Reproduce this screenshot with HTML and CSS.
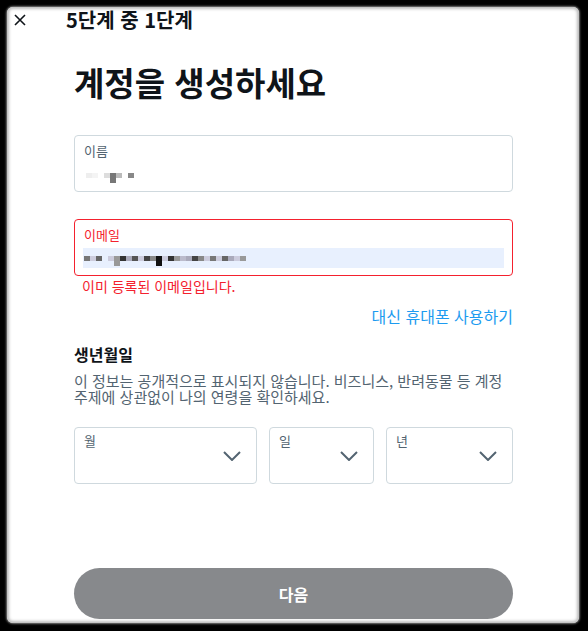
FILE: index.html
```html
<!DOCTYPE html>
<html lang="ko">
<head>
<meta charset="utf-8">
<link rel="stylesheet" href="styles.css">
</head>
<body>
<div class="panel">
  <div class="topbar">
    <svg class="close" viewBox="0 0 12 12" width="12" height="12"><path d="M1 1L11 11M11 1L1 11" stroke="#0f1419" stroke-width="1.6" fill="none"/></svg>
    <span class="step">5단계 중 1단계</span>
  </div>
  <div class="content">
    <h1 class="title">계정을 생성하세요</h1>
    <div class="field">
      <span class="label">이름</span>
      <div class="value">
        <span class="px" style="background:#eee"></span><span class="px" style="background:#f4f4f4"></span><span class="gap"></span><span class="px" style="background:#ddd"></span><span class="px tall" style="background:#777"></span><span class="px" style="background:#bbb"></span><span class="gap"></span><span class="px" style="background:#888"></span>
      </div>
    </div>
    <div class="field error">
      <span class="label">이메일</span>
      <div class="value autofill">
        <span class="px" style="background:#777"></span><span class="px" style="background:#ccd"></span><span class="px" style="background:#666"></span><span class="gap"></span><span class="px" style="background:#ccd"></span><span class="px tall" style="background:#999"></span><span class="px" style="background:#333"></span><span class="px" style="background:#aab"></span><span class="px" style="background:#555"></span><span class="px" style="background:#ccd"></span><span class="px" style="background:#444"></span><span class="px" style="background:#888"></span><span class="px tall" style="background:#111"></span><span class="px" style="background:#ccd"></span><span class="px" style="background:#333"></span><span class="px" style="background:#999"></span><span class="px" style="background:#bbc"></span><span class="px" style="background:#aab"></span><span class="px" style="background:#444"></span><span class="px" style="background:#888"></span><span class="px" style="background:#ccd"></span><span class="px" style="background:#777"></span><span class="px" style="background:#ccd"></span><span class="px" style="background:#666"></span><span class="px" style="background:#aab"></span><span class="px" style="background:#ccd"></span><span class="px" style="background:#999"></span>
      </div>
    </div>
    <p class="errmsg">이미 등록된 이메일입니다.</p>
    <div class="alt"><a class="link">대신 휴대폰 사용하기</a></div>
    <h2 class="subhead">생년월일</h2>
    <p class="desc">이 정보는 공개적으로 표시되지 않습니다. 비즈니스, 반려동물 등 계정 주제에 상관없이 나의 연령을 확인하세요.</p>
    <div class="selects">
      <div class="select month"><span class="label">월</span><svg class="chev" viewBox="0 0 18 10" width="18" height="10"><path d="M1 1L9 9L17 1" stroke="#536471" stroke-width="2" fill="none"/></svg></div>
      <div class="select day"><span class="label">일</span><svg class="chev" viewBox="0 0 18 10" width="18" height="10"><path d="M1 1L9 9L17 1" stroke="#536471" stroke-width="2" fill="none"/></svg></div>
      <div class="select year"><span class="label">년</span><svg class="chev" viewBox="0 0 18 10" width="18" height="10"><path d="M1 1L9 9L17 1" stroke="#536471" stroke-width="2" fill="none"/></svg></div>
    </div>
  </div>
  <div class="footer">
    <button class="next">다음</button>
  </div>
</div>
</body>
</html>
```

FILE: styles.css
```css
* { box-sizing: border-box; }
html, body { margin: 0; padding: 0; }
body {
  background: #000;
  width: 588px;
  height: 631px;
  overflow: hidden;
  padding: 7px 9px 8px 7px;
  font-family: "Noto Sans CJK KR", "Noto Sans", sans-serif;
  color: #0f1419;
}
.panel {
  background: #fff;
  width: 572px;
  height: 616px;
  border-radius: 6px;
  box-shadow: inset 0 0 3px 2px #bbb, 0 0 2px 1px #777;
  display: flex;
  flex-direction: column;
}
.topbar {
  display: flex;
  align-items: center;
  height: 26px;
  padding: 0 0 0 7px;
}
.close { display: block; }
.step {
  margin-left: 40px;
  font-size: 20px;
  font-weight: 700;
  line-height: 26px;
}
.content {
  padding: 0 66px 0 67px;
  flex: 1;
}
.title {
  margin: 28px 0 0;
  font-size: 33px;
  font-weight: 700;
  line-height: 42px;
}
.field {
  margin-top: 32px;
  height: 57px;
  border: 1px solid #cfd9de;
  border-radius: 4px;
  padding: 6px 8px 0 9px;
}
.field + .field { margin-top: 27px; }
.label {
  display: block;
  font-size: 13px;
  line-height: 18px;
  color: #536471;
}
.value {
  margin-top: 5px;
  height: 20px;
  display: flex;
  align-items: center;
  padding-left: 2px;
}
.px { display: inline-block; width: 6px; height: 5px; }
.px.tall { height: 10px; margin-top: 5px; }
.gap { display: inline-block; width: 6px; }
.field.error { border-color: #f4212e; }
.field.error .label { color: #f4212e; }
.value.autofill {
  background: #e8f0fe;
  margin-left: -1px;
  padding-left: 1px;
  margin-top: 4px;
}
.errmsg {
  margin: 0;
  padding-left: 8px;
  font-size: 14px;
  line-height: 20px;
  color: #f4212e;
}
.alt {
  margin-top: 10px;
  text-align: right;
  line-height: 20px;
}
.link {
  font-size: 16px;
  color: #1d9bf0;
}
.subhead {
  margin: 18px 0 0;
  font-size: 16px;
  font-weight: 700;
  line-height: 20px;
}
.desc {
  margin: 9px 0 0;
  font-size: 15px;
  line-height: 16px;
  color: #536471;
}
.selects {
  margin-top: 22px;
  display: flex;
  gap: 12px;
}
.select {
  position: relative;
  height: 57px;
  border: 1px solid #cfd9de;
  border-radius: 4px;
  padding: 4px 8px 0 9px;
}
.month { width: 183px; }
.day { width: 105px; }
.year { flex: 1; }
.chev {
  position: absolute;
  right: 15px;
  top: 23px;
}
.footer {
  padding: 0 66px 4px 67px;
}
.next {
  display: block;
  width: 100%;
  height: 51px;
  border: none;
  border-radius: 26px;
  background: #87898c;
  color: #fff;
  font-family: "Noto Sans CJK KR", "Noto Sans", sans-serif;
  font-size: 16px;
  font-weight: 700;
}
```
